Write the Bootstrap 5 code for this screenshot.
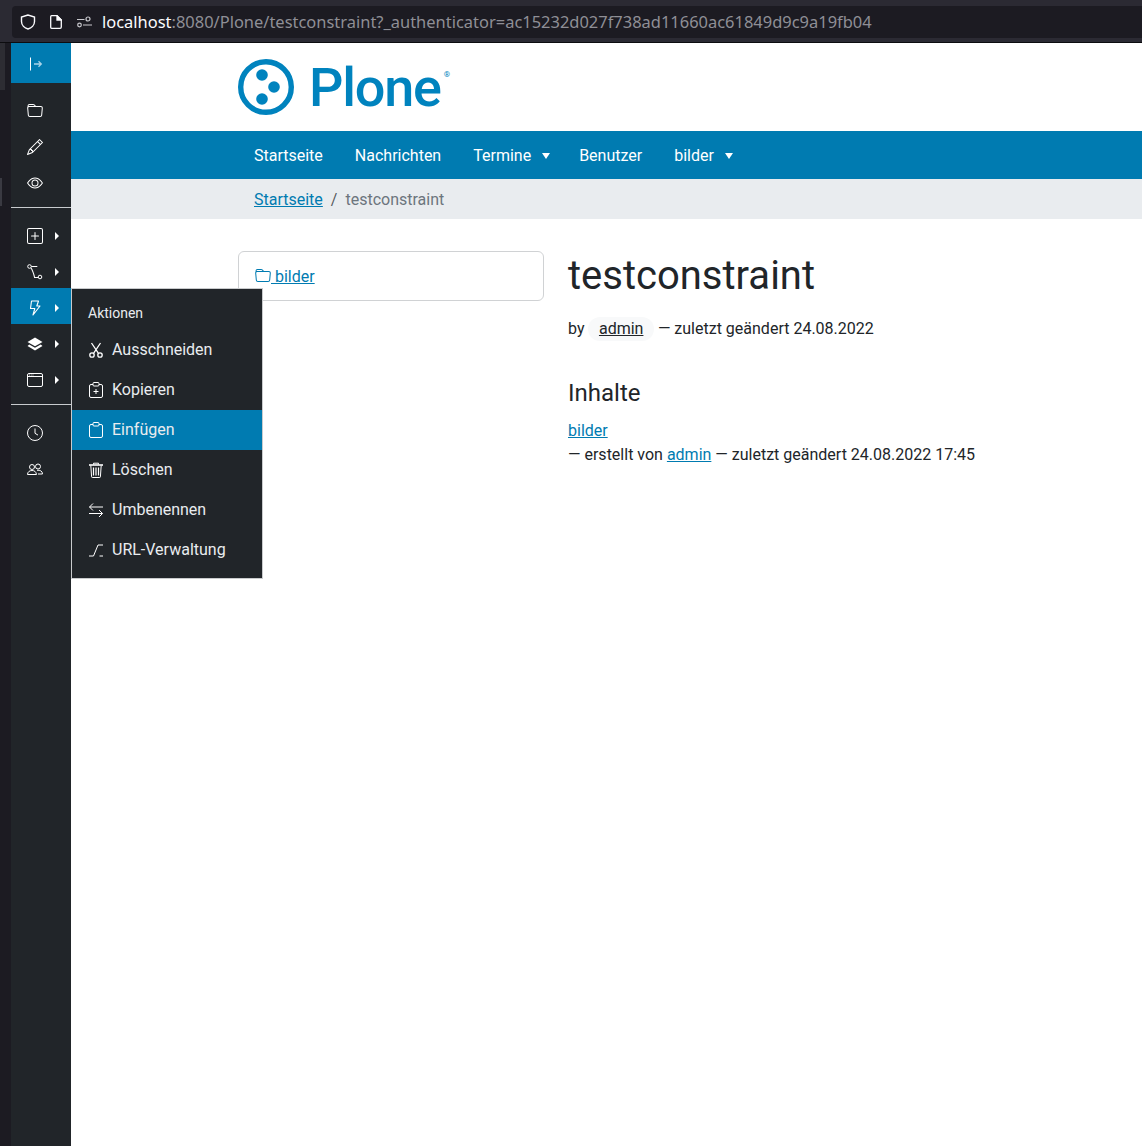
<!DOCTYPE html>
<html lang="de">
<head>
<meta charset="utf-8">
<title>testconstraint</title>
<link href="https://cdn.jsdelivr.net/npm/bootstrap@5.3.0/dist/css/bootstrap.min.css" rel="stylesheet">
<style>
html,body{height:100%;}
body{margin:0;font-family:Roboto,"Liberation Sans",sans-serif;font-size:16px;color:#212529;background:#fff;overflow:hidden;}
a{color:#007bb1;}
.bchrome{height:43px;background:#2b2a33;padding:6px 0 0 12px;border-bottom:1px solid #0c0c0f;}
.burl{height:32px;background:#1c1b22;border-radius:4px 0 0 4px;color:#fbfbfe;font-family:"Noto Sans","Open Sans",sans-serif;font-size:16.47px;white-space:nowrap;padding-left:8px;}
.burl svg{flex:none;}
.burl-doc{margin-left:14px;}
.burl-set{margin-left:15px;}
.burl-t{margin-left:10px;}
.burl .dim{color:#8f8f96;}
.bframe{height:1103px;}
.sstrip{width:11px;background:#1c1b22;flex:none;}
.sstrip-a{width:5px;height:47px;background:#2d2d33;}
.sstrip-b{width:2px;height:28px;background:#3a3a42;margin-top:88px;}
.tbar{width:60px;background:#212529;flex:none;}
.tbar-top{height:40px;background:#007bb1;padding:2px 0 0 17px;}
.tbar-list{padding:8px 0;}
.tbar-item{height:36px;padding:12px 0 0 16px;position:relative;}
.tbar-item.on{background:#007bb1;}
.tbar-item svg{display:block;}
.tbar-more::after{content:"";position:absolute;left:44px;top:16px;border-left:4px solid #fff;border-top:4px solid transparent;border-bottom:4px solid transparent;}
.tbar-sep{height:1px;background:#c8cbce;margin:0;}
.tmenu{position:absolute;left:71px;top:288px;width:192px;height:291px;background:#212529;border:1px solid #c9cbcd;padding:0 0 8px;z-index:5;color:#e9ecef;}
.tmenu-head{height:41px;padding:15px 0 0 16px;font-size:14px;line-height:18px;}
.tmenu-item{height:40px;padding:0 0 0 16px;gap:8px;line-height:38px;color:#e9ecef;}
.tmenu-item.on{background:#007bb1;}
.pmain{flex:1 1 auto;min-width:0;overflow:hidden;background:#fff;}
.pwide{width:990px;margin-left:155px;}
.pnavlist{padding-left:12px;}
.logohead{height:88px;padding-left:12px;}
.logoword{font-size:54px;font-weight:500;line-height:1;color:#0083be;letter-spacing:-1.2px;margin-left:15px;padding-top:2px;}
.logomark{font-size:8px;color:#0083be;align-self:flex-start;margin:28px 0 0 3px;line-height:1;}
.pnavbar{height:48px;background:#007bb1;}
.pnavbar .nav-link{color:#fff;padding:13px 16px 11px;line-height:24px;}
.pnavbar .dropdown-toggle{padding-right:13px;}
.pnavbar .dropdown-toggle::after{margin-left:11px;border-top-width:.42em;border-left-width:.26em;border-right-width:.26em;vertical-align:.14em;}
.crumbbar{height:40px;background:#e9ecef;}
.crumbbar .breadcrumb{margin:0;padding:9px 0 0 28px;line-height:24px;}
.crumbbar .breadcrumb-item.active{color:#6c757d;}
.pbody{padding-top:32px;}
.pcol{padding:0 12px;}
.sidecard{height:50px;border:1px solid #d0d2d4;border-radius:6px;padding:13px 16px 11px;line-height:24px;}
.ptitle{font-size:40px;font-weight:400;line-height:48px;margin:1px 0 17px;}
.pbyline{line-height:24px;margin:0 0 38px;}
.pchip{display:inline-block;background:#f8f9fa;border-radius:12px;padding:0 10.5px;color:#212529;}
.psub{font-size:24px;font-weight:400;line-height:29px;margin:0 0 11px;}
.pitem{line-height:24px;}
.pfold{vertical-align:-2px;}
</style>
</head>
<body>
<div class="bchrome">
  <div class="burl d-flex align-items-center">
    <svg width="16" height="16" viewBox="0 0 16 16" fill="none" stroke="#fbfbfe" stroke-width="1.4"><path d="M8 1 1.5 3v4.5C1.5 11 4.5 14 8 15c3.500-1 6.500-4 6.500-7.500V3z"/></svg>
    <svg class="burl-doc" width="12" height="14" viewBox="0 0 12 14" fill="none" stroke="#fbfbfe" stroke-width="1.3"><path d="M1.600.7h5.400l4.300 4.300v7a1.300 1.300 0 0 1-1.300 1.300H1.600A1 1 0 0 1 .7 12.300V1.700a1 1 0 0 1 .9-1z"/><path d="M7 .7 7 5h4.300z" fill="#fbfbfe"/></svg>
    <svg class="burl-set" width="15" height="12" viewBox="0 0 15 12" fill="none" stroke="#c9c9ce" stroke-width="1.200"><circle cx="11" cy="3" r="2"/><circle cx="2.500" cy="9" r="1.800"/><path d="M0 3.500h7.500M6 9h9"/></svg>
    <span class="burl-t"><span>localhost</span><span class="dim">:8080/Plone/testconstraint?_authenticator=ac15232d027f738ad11660ac61849d9c9a19fb04</span></span>
  </div>
</div>
<div class="bframe d-flex">
  <div class="sstrip"><div class="sstrip-a"></div><div class="sstrip-b"></div></div>
  <nav class="tbar">
    <div class="tbar-top d-flex align-items-center">
      <svg width="16" height="16" viewBox="0 0 16 16" fill="none" stroke="#fff"><path d="M2.500 1.500v13"/><path d="M6 8h7M10.500 5.300 13.300 8l-2.800 2.700" stroke="#a9d4e8" stroke-width="1.300"/></svg>
    </div>
    <div class="tbar-list">
      <div class="tbar-item"><svg width="16" height="16" viewBox="0 0 16 16" fill="#fff"><path d="M.54 3.870.5 3a2 2 0 0 1 2-2h3.672a2 2 0 0 1 1.414.586l.828.828A2 2 0 0 0 9.828 3h3.982a2 2 0 0 1 1.992 2.181l-.637 7A2 2 0 0 1 13.174 14H2.826a2 2 0 0 1-1.991-1.819l-.637-7a1.990 1.990 0 0 1 .342-1.310zM2.190 4a1 1 0 0 0-.996 1.090l.637 7a1 1 0 0 0 .995.91h10.348a1 1 0 0 0 .995-.91l.637-7A1 1 0 0 0 13.810 4H2.190zm4.690-1.707A1 1 0 0 0 6.172 2H2.500a1 1 0 0 0-1 .981l.006.139C1.720 3.042 1.950 3 2.190 3h5.396l-.707-.707z"/></svg></div>
      <div class="tbar-item"><svg width="16" height="16" viewBox="0 0 16 16" fill="#fff"><path d="M12.146.146a.5.5 0 0 1 .708 0l3 3a.5.5 0 0 1 0 .708l-10 10a.5.5 0 0 1-.168.11l-5 2a.5.5 0 0 1-.65-.65l2-5a.5.5 0 0 1 .11-.168l10-10zM11.207 2.500 13.500 4.793 14.793 3.500 12.500 1.207 11.207 2.500zm1.586 3L10.500 3.207 4 9.707V10h.5a.5.5 0 0 1 .5.5v.5h.5a.5.5 0 0 1 .5.5v.5h.293l6.500-6.500zm-9.761 5.175-.106.106-1.528 3.821 3.821-1.528.106-.106A.5.5 0 0 1 5 12.500V12h-.5a.5.5 0 0 1-.5-.5V11h-.5a.5.5 0 0 1-.468-.325z"/></svg></div>
      <div class="tbar-item"><svg width="16" height="16" viewBox="0 0 16 16" fill="#fff"><path d="M16 8s-3-5.500-8-5.500S0 8 0 8s3 5.500 8 5.500S16 8 16 8zM1.173 8a13.133 13.133 0 0 1 1.660-2.043C4.120 4.668 5.880 3.500 8 3.500c2.120 0 3.879 1.168 5.168 2.457A13.133 13.133 0 0 1 14.828 8c-.058.087-.122.183-.195.288-.335.480-.830 1.120-1.465 1.755C11.879 11.332 10.119 12.500 8 12.500c-2.120 0-3.879-1.168-5.168-2.457A13.134 13.134 0 0 1 1.172 8z"/><path d="M8 5.500a2.500 2.500 0 1 0 0 5 2.500 2.500 0 0 0 0-5zM4.500 8a3.500 3.500 0 1 1 7 0 3.500 3.500 0 0 1-7 0z"/></svg></div>
    </div>
    <div class="tbar-sep"></div>
    <div class="tbar-list">
      <div class="tbar-item tbar-more"><svg width="16" height="16" viewBox="0 0 16 16" fill="#fff"><path d="M14 1a1 1 0 0 1 1 1v12a1 1 0 0 1-1 1H2a1 1 0 0 1-1-1V2a1 1 0 0 1 1-1h12zM2 0a2 2 0 0 0-2 2v12a2 2 0 0 0 2 2h12a2 2 0 0 0 2-2V2a2 2 0 0 0-2-2H2z"/><path d="M8 4a.5.5 0 0 1 .5.5v3h3a.5.5 0 0 1 0 1h-3v3a.5.5 0 0 1-1 0v-3h-3a.5.5 0 0 1 0-1h3v-3A.5.5 0 0 1 8 4z"/></svg></div>
      <div class="tbar-item tbar-more"><svg width="16" height="16" viewBox="0 0 16 16" fill="none" stroke="#fff"><circle cx="2.500" cy="2.500" r="1.800"/><circle cx="13" cy="13" r="1.800"/><path d="M4.300 2.500h6M4 4c1.500 2 2.500 5 3.500 9M7 13.500h4.200" stroke-width="1.100"/></svg></div>
      <div class="tbar-item tbar-more on"><svg width="16" height="16" viewBox="0 0 16 16" fill="none" stroke="#fff" stroke-width="1.100" stroke-linejoin="round"><path d="M4.500 1h7L9.800 6h3.200L6 15l1.800-6.500H3.500z"/></svg></div>
      <div class="tbar-item tbar-more"><svg width="16" height="16" viewBox="0 0 16 16" fill="#fff"><path d="M8 1.500 15.500 6 8 10.200.5 6z"/><path d="M2.300 8.600 8 11.800l5.700-3.200 1.800 1.300L8 14.500.5 9.900z"/></svg></div>
      <div class="tbar-item tbar-more"><svg width="16" height="16" viewBox="0 0 16 16" fill="none" stroke="#fff"><rect x=".5" y="1.500" width="15" height="13" rx="1.500"/><path d="M.5 4.500h15"/><path d="M2 3h.8M3.800 3h.8M5.600 3h.8" stroke-width=".9"/></svg></div>
    </div>
    <div class="tbar-sep"></div>
    <div class="tbar-list">
      <div class="tbar-item"><svg width="16" height="16" viewBox="0 0 16 16" fill="none" stroke="#fff"><circle cx="8" cy="8" r="7.500"/><path d="M8 3.500V8.300l3 1.800"/></svg></div>
      <div class="tbar-item"><svg width="16" height="16" viewBox="0 0 16 16" fill="none" stroke="#fff"><circle cx="5" cy="6" r="2.500"/><circle cx="11" cy="5.500" r="2.500"/><path d="M.5 13.500c0-2.500 2-4 4.500-4s4 1.200 4.500 4zM10 9.300c3-.5 5.500.8 5.500 3.700H11"/></svg></div>
    </div>
  </nav>
  <main class="pmain">
    <div class="pwide">
      <div class="logohead d-flex align-items-center">
        <svg width="56" height="56" viewBox="0 0 56 56" fill="#0083be"><circle cx="28" cy="28" r="25.300" fill="none" stroke="#0083be" stroke-width="5.400"/><circle cx="24" cy="16" r="5.800"/><circle cx="36" cy="28" r="5.800"/><circle cx="24" cy="40" r="5.800"/></svg>
        <span class="logoword">Plone</span><span class="logomark">®</span>
      </div>
    </div>
    <div class="pnavbar">
      <ul class="nav pwide pnavlist">
        <li class="nav-item"><a class="nav-link" href="#">Startseite</a></li>
        <li class="nav-item"><a class="nav-link" href="#">Nachrichten</a></li>
        <li class="nav-item"><a class="nav-link dropdown-toggle" href="#">Termine</a></li>
        <li class="nav-item"><a class="nav-link" href="#">Benutzer</a></li>
        <li class="nav-item"><a class="nav-link dropdown-toggle" href="#">bilder</a></li>
      </ul>
    </div>
    <div class="crumbbar">
      <div class="pwide">
        <ol class="breadcrumb">
          <li class="breadcrumb-item"><a href="#">Startseite</a></li>
          <li class="breadcrumb-item active">testconstraint</li>
        </ol>
      </div>
    </div>
    <div class="pwide pbody">
      <div class="row g-0">
        <div class="col-4 pcol">
          <div class="sidecard"><a href="#"><svg class="pfold" width="16" height="16" viewBox="0 0 16 16" fill="currentColor"><path d="M.54 3.870.5 3a2 2 0 0 1 2-2h3.672a2 2 0 0 1 1.414.586l.828.828A2 2 0 0 0 9.828 3h3.982a2 2 0 0 1 1.992 2.181l-.637 7A2 2 0 0 1 13.174 14H2.826a2 2 0 0 1-1.991-1.819l-.637-7a1.990 1.990 0 0 1 .342-1.310zM2.190 4a1 1 0 0 0-.996 1.090l.637 7a1 1 0 0 0 .995.91h10.348a1 1 0 0 0 .995-.91l.637-7A1 1 0 0 0 13.810 4H2.190zm4.690-1.707A1 1 0 0 0 6.172 2H2.500a1 1 0 0 0-1 .981l.006.139C1.720 3.042 1.950 3 2.190 3h5.396l-.707-.707z"/></svg> bilder</a></div>
        </div>
        <div class="col-8 pcol">
          <h1 class="ptitle">testconstraint</h1>
          <p class="pbyline">by <a class="pchip" href="#">admin</a> — zuletzt geändert 24.08.2022</p>
          <h2 class="psub">Inhalte</h2>
          <div class="pitem"><a href="#">bilder</a></div>
          <div class="pitem">— erstellt von <a href="#">admin</a> — zuletzt geändert 24.08.2022 17:45</div>
        </div>
      </div>
    </div>
  </main>
</div>
<div class="tmenu">
  <div class="tmenu-head">Aktionen</div>
  <div class="tmenu-item d-flex align-items-center"><svg width="16" height="16" viewBox="0 0 16 16" fill="none" stroke="#fff" stroke-width="1.300"><circle cx="4" cy="13" r="2.200"/><circle cx="12" cy="13" r="2.200"/><path d="M3.500 1l6.800 10.200M12.500 1 5.700 11.200"/></svg><span>Ausschneiden</span></div>
  <div class="tmenu-item d-flex align-items-center"><svg width="16" height="16" viewBox="0 0 16 16" fill="none" stroke="#fff"><path d="M5 2.500H3A1.500 1.500 0 0 0 1.500 4v10A1.500 1.500 0 0 0 3 15.500h10a1.500 1.500 0 0 0 1.500-1.500V4A1.500 1.500 0 0 0 13 2.500h-2"/><rect x="5" y=".5" width="6" height="3.500" rx="1"/><path d="M8 7v5M5.500 9.500h5"/></svg><span>Kopieren</span></div>
  <div class="tmenu-item on d-flex align-items-center"><svg width="16" height="16" viewBox="0 0 16 16" fill="none" stroke="#fff"><path d="M5 2.500H3A1.500 1.500 0 0 0 1.500 4v10A1.500 1.500 0 0 0 3 15.500h10a1.500 1.500 0 0 0 1.500-1.500V4A1.500 1.500 0 0 0 13 2.500h-2"/><rect x="5" y=".5" width="6" height="3.500" rx="1"/></svg><span>Einfügen</span></div>
  <div class="tmenu-item d-flex align-items-center"><svg width="16" height="16" viewBox="0 0 16 16" fill="none" stroke="#fff"><path d="M1 3h14" stroke-width="1.600"/><path d="M5.500 2.500V1.200h5V2.500M2.800 3.500l.8 11.300c0 .4.300.7.700.7h7.400c.4 0 .7-.3.700-.7l.8-11.300"/><path d="M5.500 5.500v8M8 5.500v8M10.500 5.500v8" stroke-width="1.200"/></svg><span>Löschen</span></div>
  <div class="tmenu-item d-flex align-items-center"><svg width="16" height="16" viewBox="0 0 16 16" fill="none" stroke="#fff"><path d="M15 5H1.500M5 1.500 1.500 5 5 8.500M1 11.500h13.500M11 8 14.500 11.500 11 15"/></svg><span>Umbenennen</span></div>
  <div class="tmenu-item d-flex align-items-center"><svg width="16" height="16" viewBox="0 0 16 16" fill="none" stroke="#fff"><path d="M1 14h4.500L10 3h5M11.500 14H15"/></svg><span>URL-Verwaltung</span></div>
</div>
</body>
</html>
